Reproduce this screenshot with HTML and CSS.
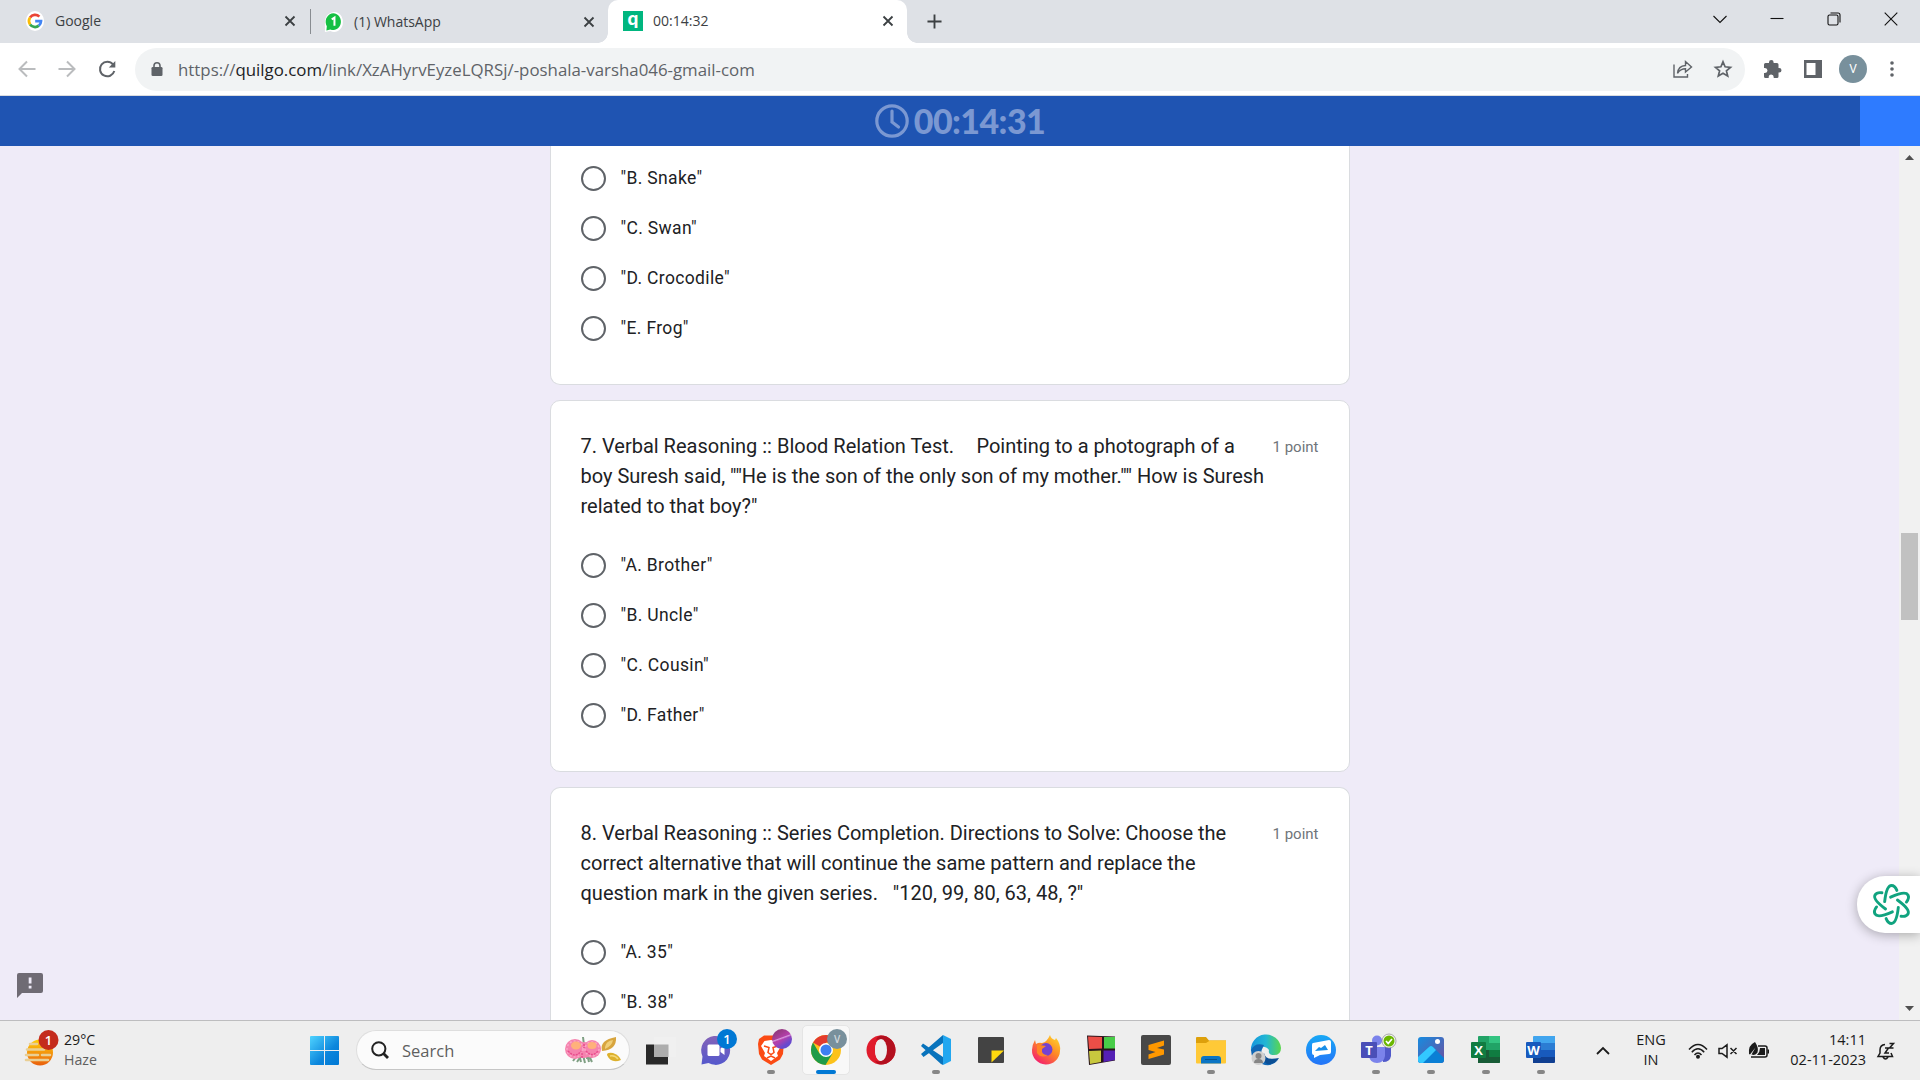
FILE: index.html
```html
<!DOCTYPE html>
<html lang="en">
<head>
<meta charset="utf-8">
<title>00:14:32</title>
<link rel="stylesheet" href="styles.css">
</head>
<body>
<div class="desktop">
  <header class="tabstrip">
    <div class="tab">
      <svg class="favicon" viewBox="0 0 20 22"><ellipse cx="10" cy="11" rx="10" ry="11" fill="#fff"/><g fill="none" stroke-width="3"><path d="M4.6 7.2A6.6 6.6 0 0 1 14.8 6.2" stroke="#ea4335"/><path d="M4.6 7.2a6.8 6.8 0 0 0 0 7.6" stroke="#fbbc05"/><path d="M4.6 14.8a6.6 6.6 0 0 0 9.6 1.3" stroke="#34a853"/><path d="M10.2 11.2h6.4a6.6 6.6 0 0 1-2.4 4.9" stroke="#4285f4"/></g></svg>
      <span class="tab-title">Google</span>
      <svg class="close" viewBox="0 0 12 12"><path d="M1.5 1.5l9 9M10.5 1.5l-9 9"/></svg>
    </div>
    <div class="tab tab-second">
      <svg class="favicon" viewBox="0 0 20 22"><path d="M0 22V11A10 11 0 1 1 6 21z" fill="#fff"/><path d="M1.600 20.300l.5-4.700A8.400 9.200 0 1 1 6 19.200z" fill="#15c043"/><path d="M7.500 8l3-1.800V15" fill="none" stroke="#fff" stroke-width="2.200"/></svg>
      <span class="tab-title">(1) WhatsApp</span>
      <svg class="close" viewBox="0 0 12 12"><path d="M1.500 1.500l9 9M10.500 1.500l-9 9"/></svg>
    </div>
    <div class="tab tab-active">
      <span class="q-icon">q</span>
      <span class="tab-title">00:14:32</span>
      <svg class="close" viewBox="0 0 12 12"><path d="M1.500 1.500l9 9M10.500 1.500l-9 9"/></svg>
    </div>
    <svg class="new-tab" viewBox="0 0 16 16"><path d="M8 .5v15M.5 8h15"/></svg>
    <div class="window-buttons">
      <svg viewBox="0 0 14 14"><path d="M.5 4L7 10.500 13.500 4"/></svg>
      <svg viewBox="0 0 14 14"><path d="M.5 6.500h13"/></svg>
      <svg viewBox="0 0 14 14"><rect x="1" y="3" width="10" height="10" rx="1.500"/><path d="M3.500 1H11q2 0 2 2v7.500"/></svg>
      <svg viewBox="0 0 14 14"><path d="M.7 .7l12.600 12.600M13.300 .7L.7 13.300"/></svg>
    </div>
  </header>

  <div class="toolbar">
    <div class="nav">
      <svg class="dim" viewBox="0 0 18 18"><path d="M17.500 9H1.500M9 1.500L1.500 9 9 16.500"/></svg>
      <svg class="dim" viewBox="0 0 18 18"><path d="M.5 9h16M9 1.500L16.500 9 9 16.500"/></svg>
      <svg viewBox="0 0 18 18"><path d="M15 4.500A7.300 7.300 0 1 0 16.300 11"/><path d="M17.300 1v6.500h-6.500z" fill="#5f6368" stroke="none"/></svg>
    </div>
    <div class="omnibox">
      <svg class="lock" viewBox="0 0 12 14"><rect x=".5" y="5" width="11" height="9" rx="1.300" fill="#5f6368"/><path d="M3 5.500V3.800a3 3 0 0 1 6 0v1.700" fill="none" stroke="#5f6368" stroke-width="1.600"/></svg>
      <span class="url">https://<b>quilgo.com</b>/link/XzAHyrvEyzeLQRSj/-poshala-varsha046-gmail-com</span>
      <svg class="share" viewBox="0 0 20 18"><path d="M1 4.500V17h13.500v-3M4.500 13.300c.5-5 3.500-7.500 8-7.800V1.500L18.500 7l-6 5V8.800c-4 0-6 1.500-8 4.500z"/></svg>
      <svg class="star" viewBox="0 0 18 18"><path d="M9 1.800l2.100 5 5.400.5-4.100 3.500 1.300 5.300L9 13.300l-4.700 2.800 1.300-5.300-4.100-3.500 5.400-.5z"/></svg>
    </div>
    <svg class="puzzle" viewBox="0 0 20 20"><path d="M2 5.500q0-1.500 1.500-1.500H7V3.300a2.300 2.300 0 0 1 4.600 0V4H15q1.500 0 1.500 1.500V9h.7a2.300 2.300 0 0 1 0 4.600h-.7v3.900q0 1.500-1.500 1.500h-3.300v-1a2.500 2.500 0 0 0-5 0v1H3.500Q2 19 2 17.500V14h1a2.500 2.500 0 0 0 0-5H2z" fill="#5f6368"/></svg>
    <svg class="panel" viewBox="0 0 18 18"><path fill-rule="evenodd" d="M0 0h18v18H0zM2.500 3v12h9V3z" fill="#5f6368"/></svg>
    <span class="avatar">V</span>
    <svg class="kebab" viewBox="0 0 4 16"><circle cx="2" cy="2" r="1.800"/><circle cx="2" cy="8" r="1.800"/><circle cx="2" cy="14" r="1.800"/></svg>
  </div>

  <div class="timer">
    <svg viewBox="0 0 34 34"><circle cx="17" cy="17" r="15.200"/><path d="M17 7v11l6.500 5"/></svg>
    <span>00:14:31</span>
  </div>

  <main class="page">
    <div class="viewport">
      <section class="card card-first">
        <label class="option"><i></i>"B. Snake"</label>
        <label class="option"><i></i>"C. Swan"</label>
        <label class="option"><i></i>"D. Crocodile"</label>
        <label class="option"><i></i>"E. Frog"</label>
      </section>
      <section class="card">
        <div class="question"><h2>7. Verbal Reasoning :: Blood Relation Test. &nbsp;&nbsp; <span class="after-gap">Pointing to a photograph of a</span><br>boy Suresh said, ""He is the son of the only son of my mother."" How is Suresh<br>related to that boy?"</h2><span class="points">1 point</span></div>
        <label class="option"><i></i>"A. Brother"</label>
        <label class="option"><i></i>"B. Uncle"</label>
        <label class="option"><i></i>"C. Cousin"</label>
        <label class="option"><i></i>"D. Father"</label>
      </section>
      <section class="card card-last">
        <div class="question"><h2>8. Verbal Reasoning :: Series Completion. Directions to Solve: Choose the<br>correct alternative that will continue the same pattern and replace the<br>question mark in the given series. &nbsp; "120, 99, 80, 63, 48, ?"</h2><span class="points">1 point</span></div>
        <label class="option"><i></i>"A. 35"</label>
        <label class="option"><i></i>"B. 38"</label>
      </section>
    </div>
    <div class="scrollbar">
      <svg viewBox="0 0 9 5"><path d="M0 5L4.500 0 9 5z"/></svg>
      <span class="thumb"></span>
      <svg class="down" viewBox="0 0 9 5"><path d="M0 0l4.500 5L9 0z"/></svg>
    </div>
    <svg class="feedback" viewBox="0 0 26 25"><path d="M2 0h22q2 0 2 2v16q0 2-2 2H5l-5 5V2q0-2 2-2z" fill="#6f6b74"/><path d="M11.700 4.500h2.800v6h-2.800zM11.700 12.800h2.800v2.800h-2.800z" fill="#efebf8"/></svg>
    <div class="assistant">
      <svg viewBox="-20 -21 40 42"><g fill="none" stroke="#10a37f" stroke-width="3" stroke-linecap="round">
        <path id="petal" d="M-7-3C-6-12-4-19.500 0-19.500q3.500 0 5.500 5"/>
        <use href="#petal" transform="rotate(60)"/><use href="#petal" transform="rotate(120)"/><use href="#petal" transform="rotate(180)"/><use href="#petal" transform="rotate(240)"/><use href="#petal" transform="rotate(300)"/></g></svg>
    </div>
  </main>

  <footer class="taskbar">
    <div class="weather">
      <svg viewBox="0 0 36 36"><defs><linearGradient id="sun" x2="0" y2="1"><stop stop-color="#ffcf0a"/><stop offset="1" stop-color="#e95f0c"/></linearGradient></defs><circle cx="16" cy="21.500" r="13" fill="url(#sun)"/><path d="M6 13h7M3 18.500h17M2 24h12M18 24h8M2 29h22" stroke="#e9cf94" stroke-width="2.600" stroke-linecap="round"/><circle cx="24.500" cy="9" r="10" fill="#c42b1c"/><text x="24.500" y="13.800" text-anchor="middle" class="badge-text">1</text></svg>
      <div class="weather-text"><span>29°C</span><span class="muted">Haze</span></div>
    </div>
    <svg class="start" viewBox="0 0 29 29"><defs><linearGradient id="win" gradientUnits="userSpaceOnUse" x1="0" y1="0" x2="29" y2="29"><stop stop-color="#4fd3ff"/><stop offset=".6" stop-color="#0c86dc"/><stop offset="1" stop-color="#0078d4"/></linearGradient></defs><path fill="url(#win)" d="M1 0h13v14H0V1q0-1 1-1zM15 0h13q1 0 1 1v13H15zM0 15h14v14H1q-1 0-1-1zM15 15h14v13q0 1-1 1H15z"/></svg>
    <div class="search">
      <svg class="glass" viewBox="0 0 18 18"><circle cx="7.800" cy="7.800" r="6.600"/><path d="M12.500 12.500l4.500 4.500" stroke-width="2.800"/></svg>
      <span>Search</span>
      <svg class="flowers" viewBox="0 0 58 28"><path d="M17 20l-4 6M19 19l2 8M25 20l3 6M12 21l-3 4M19 1l1 8M22 22l6-1M16 22l1 4M24 22l1 4" stroke="#7f9f83" stroke-width="2"/><g fill="#f583ae"><circle cx="11" cy="13" r="10"/><circle cx="28" cy="13" r="9"/><circle cx="20" cy="14" r="8"/></g><g fill="none" stroke="#f9a9c8" stroke-width="1.500" stroke-dasharray="2 2"><circle cx="11" cy="13" r="8"/><circle cx="28" cy="13" r="7"/></g><g fill="none" stroke="#e84b8c" stroke-width="1.500" stroke-dasharray="2 1"><path d="M4 15q7 8 13 0M22 15q6 7 12 0M18 17v5M20 8v4"/></g><ellipse cx="12" cy="9.500" rx="5" ry="4" fill="#ffb17b"/><ellipse cx="28" cy="9.500" rx="4.500" ry="3.500" fill="#ffb17b"/><path d="M38 15Q35 4 52 1q1 13-14 14z" fill="#d8a53e"/><path d="M41 11q1-6 8-7-1 6-8 9z" fill="#f0cf78"/><path d="M43 19q0-3 6-2 6 2 8 7-10 4-14-5z" fill="#ddb12d"/><path d="M46 20q5-1 8 3" fill="none" stroke="#f5d978" stroke-width="1.500"/></svg>
    </div>
    <nav class="apps">
      <div class="app"><svg viewBox="0 0 32 32"><path d="M1 10.500h22v20H1z" fill="#292929"/><path d="M9 3h22v20H9z" fill="#f0f0f0"/><path d="M9 10.500h14.500V23H9z" fill="#adadad"/></svg></div>
      <div class="app"><svg viewBox="0 0 32 32"><defs><linearGradient id="chat" x2="0" y2="1"><stop stop-color="#8463b8"/><stop offset="1" stop-color="#5458cc"/></linearGradient></defs><path d="M1.500 30.500l1-8a14.500 14.500 0 1 1 6 6.500z" fill="url(#chat)"/><rect x="7.500" y="10.500" width="12" height="11.500" rx="1.500" fill="#fff"/><path d="M20.500 14.500l4-3v9.500l-4-3z" fill="#fff"/></svg><span class="badge blue">1</span></div>
      <div class="app run"><svg viewBox="0 0 32 32"><path d="M9 1.500h14l6 5.500-1 13-3 5.500-9 5.500-9-5.500-3-5.500L3 10l1-5z" fill="#fb4b14"/><path d="M9.500 7l6.500-1 6.500 1L26 12l-4 7 1 3-7 5-7-5 1-3-4-7z" fill="#fff"/><path d="M9 12l5 1.500-1 5 3 2 3-2-1-5 5-1.500M12 24l4-2 4 2" fill="none" stroke="#fb4b14" stroke-width="1.500"/></svg><span class="badge violet"></span></div>
      <div class="app current"><svg viewBox="0 0 32 32"><circle cx="16" cy="16" r="15" fill="#fcc21b"/><path d="M16 16L3 8.500A15 15 0 0 1 29 8.500H16z" fill="#e33b2e"/><path d="M3 8.500A15 15 0 0 0 15.500 31L22.500 19.500l-13 0z" fill="#1e9b49"/><circle cx="16" cy="16" r="7" fill="#fff"/><circle cx="16" cy="16" r="5.500" fill="#3d7ff0"/></svg><span class="badge grey">V</span></div>
      <div class="app"><svg viewBox="0 0 32 32"><path fill-rule="evenodd" d="M16 1.500a14.500 14.500 0 1 0 0 29 14.500 14.500 0 0 0 0-29zm0 3.500c4 0 6 5 6 11s-2 11-6 11-6-5-6-11 2-11 6-11z" fill="#e01b2c"/><path d="M16 1.500a14.500 14.500 0 0 1 0 29c-3 0-5-2-6-4 12 6 16-19 1-21 1-2 3-4 5-4z" fill="#b3101f"/><ellipse cx="16" cy="16" rx="6" ry="11" fill="#eee"/></svg></div>
      <div class="app run"><svg viewBox="0 0 32 32"><path d="M23 1l8 4v22l-8 4z" fill="#22a7f0"/><path d="M3 9.500L1 12l20 18 2 1v-8zM23 1L1 20l2.500 3L23 9z" fill="#0873bc"/></svg></div>
      <div class="app"><svg viewBox="0 0 32 32"><rect x="3" y="3" width="26" height="26" rx="1" fill="#434343"/><path d="M16.500 16.500H29l-12.500 12z" fill="#ffd90f"/></svg></div>
      <div class="app"><svg viewBox="0 0 32 32"><defs><linearGradient id="fox" x1="1" y1="0" x2=".3" y2="1"><stop stop-color="#ffe22e"/><stop offset=".5" stop-color="#ff8a25"/><stop offset="1" stop-color="#f4206c"/></linearGradient></defs><path d="M20 1q1 4 5 5l1-2q5 6 4 13a14 14 0 0 1-28-1Q2 11 5 6l1 4q3-2 6-1 5-1 8-8z" fill="url(#fox)"/><circle cx="16" cy="15.500" r="6.500" fill="#7442d0"/><path d="M7 11q4 0 9 1l-4 3q-1 6 6 6-7 4-11-2z" fill="#ff8525"/></svg></div>
      <div class="app"><svg viewBox="0 0 32 32"><path d="M2 1.500l28 1v24L4 31z" fill="#28141a"/><path d="M3 2.500l14 .5v11.500l-13 .5z" fill="#ec4e47"/><path d="M19 3h11v11.500H19z" fill="#48cc48"/><path d="M4 17l12-.5v11.500L5 30z" fill="#c8c83e"/><path d="M18.500 16.500H30v9.500l-11.500 2z" fill="#5520b5"/></svg></div>
      <div class="app"><svg viewBox="0 0 32 32"><rect x="1" y="1" width="30" height="30" rx="2" fill="#484848"/><path d="M24 6.500L8.500 11v5l7 2-7 2.500v4.500L24 20.500v-5L17 14l7-2.500z" fill="#ff9800"/></svg></div>
      <div class="app run"><svg viewBox="0 0 32 32"><path d="M1 4q0-1 1-1h9l3 3.500h17V18H1z" fill="#dda00b"/><path d="M1 9h10l4-2.500h16v22q0 1-1 1H2q-1 0-1-1z" fill="#ffc937"/><path d="M6 29.500V25q0-3 3-3h14q3 0 3 3v4.500z" fill="#0b75c4"/><path d="M10 25.500h12" stroke="#07538d"/></svg></div>
      <div class="app"><svg viewBox="0 0 32 32"><defs><linearGradient id="edge"><stop stop-color="#1595dd"/><stop offset=".5" stop-color="#22b7d4"/><stop offset="1" stop-color="#5bd74c"/></linearGradient></defs><path d="M1 17A15 15 0 0 1 31 14q0 8-9 7-4-1-3-5-5-7-18 1z" fill="url(#edge)"/><path d="M1 16q4-8 13-5-7 12 3 17 5 2 11-2-7 8-16 4Q1 27 1 16z" fill="#1067b5"/><path d="M14 19q1 8 15 5-4 7-12 6-6-4-3-11z" fill="#0b4f95"/><circle cx="8.500" cy="24" r="7" fill="#cfcfcf"/><circle cx="8.500" cy="22" r="3" fill="#858585"/><path d="M4 29q0-4 4.500-4t4.500 4z" fill="#858585"/></svg></div>
      <div class="app"><svg viewBox="0 0 32 32"><defs><linearGradient id="msg" x2="0" y2="1"><stop stop-color="#18a8f5"/><stop offset="1" stop-color="#2474f8"/></linearGradient></defs><circle cx="16" cy="16" r="15" fill="url(#msg)"/><path d="M8 9l16-3q2 0 2 2v10q0 2-2 2l-9 1-6 3 0-3q-2 0-2-2v-8q0-2 1-2z" fill="#fff"/><path d="M10 17l4-4 2 1 4-3 3 5z" fill="#188ee8"/></svg></div>
      <div class="app run"><svg class="teams" viewBox="0 0 36 32"><circle cx="17" cy="6.500" r="5" fill="#7b83eb"/><circle cx="27" cy="9" r="3.500" fill="#5059c9"/><path d="M22 13h9v9q-1 6-8 6z" fill="#5059c9"/><path d="M10 13h15v9q-1 7-8 7t-8-7z" fill="#7b83eb"/><rect x="1" y="8" width="16" height="16" rx="1" fill="#4a4fb8"/><text x="9" y="21" text-anchor="middle" class="office-text">T</text><circle cx="29" cy="7" r="7" fill="#f5f5f5" stroke="#777" stroke-width=".6"/><circle cx="29" cy="7" r="5.500" fill="#6bb700"/><path d="M26 7l2.200 2.500L32 5" fill="none" stroke="#fff" stroke-width="1.700"/></svg></div>
      <div class="app run"><svg viewBox="0 0 32 32"><defs><linearGradient id="photo" x2="1" y2="1"><stop stop-color="#168ce0"/><stop offset="1" stop-color="#6e4f9e"/></linearGradient></defs><rect x="3" y="3" width="26" height="26" rx="3" fill="url(#photo)"/><path d="M3 24L14 13q2-2 4 0l11 11v2q0 3-3 3H6q-3 0-3-3z" fill="#0a7fd5"/><path d="M3 23l11-10q2-2 4 0l3 3L8 29H6q-3 0-3-3z" fill="#33c8ff"/><circle cx="22.500" cy="7.500" r="2.500" fill="#fff"/></svg></div>
      <div class="app run"><svg viewBox="0 0 32 32"><path d="M8 3q0-1 1-1h21v26q0 1-1 1H8z" fill="#21a366"/><path d="M19 2h11v7H19z" fill="#33c481"/><path d="M8 16h11v7H8z" fill="#185c37"/><path d="M19 16h11v7H19z" fill="#107c41"/><path d="M8 23h22v5q0 1-1 1H8z" fill="#185c37"/><rect x="1" y="8" width="15" height="16" rx="1" fill="#107c41"/><text x="8.500" y="20.800" text-anchor="middle" class="office-text">X</text></svg></div>
      <div class="app run"><svg viewBox="0 0 32 32"><path d="M8 3q0-1 1-1h21v7H8z" fill="#41a5ee"/><path d="M8 9h22v7H8z" fill="#2b7cd3"/><path d="M8 16h22v7H8z" fill="#185abd"/><path d="M8 23h22v5q0 1-1 1H8z" fill="#103f91"/><rect x="1" y="8" width="15" height="16" rx="1" fill="#185abd"/><text x="8.500" y="20.800" text-anchor="middle" class="office-text">W</text></svg></div>
    </nav>
    <div class="tray">
      <svg class="chevron" viewBox="0 0 14 8"><path d="M1 7l6-6 6 6"/></svg>
      <div class="lang"><span>ENG</span><span>IN</span></div>
      <svg class="wifi" viewBox="0 0 20 16"><path d="M1 6.500q9-10 18 0M3.800 9.300q6.200-7 12.400 0M6.500 12q3.500-4 7 0"/><circle cx="10" cy="13.700" r="2" fill="#1b1b1b" stroke="none"/></svg>
      <svg class="speaker" viewBox="0 0 20 14"><path d="M1 4.500h3L9 .8v12.400L4 9.500H1zM12.500 4l6 6M18.500 4l-6 6"/></svg>
      <svg class="battery" viewBox="0 0 20 17"><path d="M9 4h7q2 0 2 2v7q0 2-2 2H2"/><path d="M11 6h5v7H8q3-3 3-7zM18.500 7.500h1.500v4h-1.500zM0 12Q-1 3 6 0q4 6 2.500 10.500-2 3.500-6 2l4-7-5.500 7z" fill="#1b1b1b" stroke="none"/></svg>
      <div class="clock"><span>14:11</span><span>02-11-2023</span></div>
      <svg class="bell" viewBox="0 0 18 18"><path d="M8 2.500Q3 3 3 8v3l-2 3.500h14.500L14 11M6 15q2.500 4 5 0M8 6h3.500L8 11h4M12.500 1.500h4L12.500 6h4"/></svg>
    </div>
  </footer>
</div>
</body>
</html>
```
FILE: styles.css
```css
* { box-sizing: border-box; }
body { margin: 0; font-family: "Open Sans", "Noto Sans", sans-serif; color: #1b1b1b; }
svg { display: block; flex: none; overflow: visible; }
.desktop { width: 1920px; height: 1080px; display: flex; flex-direction: column; overflow: hidden; }

/* Tab strip */
.tabstrip { height: 43px; flex: none; display: flex; align-items: flex-start; background: #dee1e6; }
.tab { height: 43px; width: 310px; display: flex; align-items: center; padding: 0 14px 2px 25px; gap: 10px; }
.tab-second { width: 298px; padding: 0 13px 0 13px; border-left: 1px solid #888c91; height: 25px; margin-top: 9px; }
.tab-active { position: relative; width: 299px; padding: 0 13px 2px 15px; background: #fff; border-radius: 10px 10px 0 0; }
.tab-active::before, .tab-active::after { content: ""; position: absolute; bottom: 0; width: 10px; height: 10px; }
.tab-active::before { left: -10px; background: radial-gradient(circle at 0 0, transparent 9.5px, #fff 10px); }
.tab-active::after { right: -10px; background: radial-gradient(circle at 100% 0, transparent 9.5px, #fff 10px); }
.favicon { width: 20px; height: 20px; }
.tab-title { flex: 1; font-size: 14px; line-height: 20px; color: #3c4043; white-space: nowrap; }
.close { width: 12px; height: 12px; fill: none; stroke: #3c4043; stroke-width: 1.8; }
.q-icon { width: 20px; height: 20px; background: #00b67f; color: #fff; font: 900 19px/14px Lato, sans-serif; text-align: center; }
.new-tab { width: 15px; height: 15px; margin: 14px 0 0 20px; fill: none; stroke: #3c4043; stroke-width: 2; }
.window-buttons { margin: 12px 22px 0 auto; display: flex; gap: 43px; }
.window-buttons svg { width: 14px; height: 14px; fill: none; stroke: #111; stroke-width: 1.1; }

/* Toolbar */
.toolbar { height: 53px; flex: none; display: flex; align-items: center; background: #fff; border-bottom: 1px solid #dadce0; }
.nav { width: 135px; display: flex; gap: 22px; padding-left: 18px; }
.nav svg { width: 18px; height: 18px; fill: none; stroke: #5f6368; stroke-width: 2; }
.nav .dim { stroke: #babcbe; }
.omnibox { width: 1610px; height: 43px; display: flex; align-items: center; padding: 0 13px 0 16px; background: #f1f3f4; border-radius: 22px; }
.lock { width: 12px; height: 14px; margin-right: 15px; }
.url { flex: 1; font-size: 16.85px; line-height: 24px; padding-top: 1px; color: #5f6368; white-space: nowrap; }
.url b { font-weight: 400; color: #202124; }
.share { width: 20px; height: 18px; margin-right: 21px; fill: none; stroke: #5f6368; stroke-width: 1.4; }
.star { width: 18px; height: 18px; fill: none; stroke: #5f6368; stroke-width: 1.7; }
.puzzle { width: 20px; height: 20px; margin-left: 17px; }
.panel { width: 18px; height: 18px; margin-left: 22px; }
.avatar { width: 28px; height: 28px; margin-left: 17px; border-radius: 50%; background: #78909c; color: #fff; font: 12px/28px Roboto, sans-serif; text-align: center; }
.kebab { width: 4px; height: 16px; margin-left: 23px; fill: #5f6368; }

/* Countdown bar */
.timer { height: 50px; flex: none; display: flex; align-items: center; justify-content: center; gap: 5px; padding-bottom: 1px; background: linear-gradient(90deg, #1f54b2 1860px, #2e7bff 1860px); color: #7b98d2; font: 900 34px/50px Lato, sans-serif; letter-spacing: -.6px; }
.timer svg { width: 34px; height: 34px; fill: none; stroke: #7b98d2; stroke-width: 3.2; stroke-linecap: round; }

/* Form */
.page { position: relative; height: 874px; flex: none; display: flex; background: #efebf8; overflow: hidden; }
.viewport { flex: 1; display: flex; flex-direction: column; align-items: center; gap: 15px; font-family: Roboto, sans-serif; color: #202124; }
.card { width: 800px; flex: none; padding: 30px 30px 31px; background: #fff; border: 1px solid #dadce0; border-radius: 10px; }
.card-first { padding-top: 7px; border-top: 0; border-radius: 0 0 10px 10px; }
.card-last { border-bottom: 0; border-radius: 10px 10px 0 0; }
.question { display: flex; justify-content: space-between; margin-bottom: 19px; }
.question h2 { margin: 0; font-size: 20px; line-height: 30px; font-weight: 400; white-space: nowrap; }
.after-gap { margin-left: 2.5px; }
.points { font-size: 15px; line-height: 32px; color: #70757a; }
.option { height: 50px; display: flex; align-items: center; font-size: 17.5px; letter-spacing: .35px; white-space: nowrap; padding-bottom: 1px; }
.option i { width: 25px; height: 25px; margin: 1px 15px 0 0; border: 2.5px solid #5f6368; border-radius: 50%; }
.scrollbar { width: 21px; display: flex; flex-direction: column; align-items: center; padding: 9px 0; background: #f1f1f1; }
.scrollbar svg { width: 9px; height: 5px; fill: #505050; }
.thumb { width: 17px; height: 87px; margin-top: 373px; background: #c1c1c1; }
.scrollbar .down { margin-top: auto; }
.feedback { position: absolute; left: 17px; top: 827px; width: 26px; height: 25px; }
.assistant { position: absolute; right: 0; top: 730px; width: 63px; height: 57px; padding: 8px 9px 0 15px; background: #fff; border-radius: 28px 0 0 28px; box-shadow: 0 2px 12px rgba(0,0,0,.3); }
.assistant svg { width: 39px; height: 41px; }

/* Taskbar */
.taskbar { height: 60px; flex: none; display: flex; align-items: center; background: #eee; border-top: 1px solid #bdbdbf; }
.weather { width: 310px; display: flex; align-items: center; gap: 4px; padding-left: 24px; }
.weather svg { width: 36px; height: 36px; margin-bottom: 4px; }
.weather-text, .lang, .clock { display: flex; flex-direction: column; font-size: 14.5px; line-height: 20px; padding-bottom: 2px; }
.weather-text { font-size: 14.2px; }
.muted { color: #5f5f5f; }
.badge-text { font: 600 13px "Open Sans", sans-serif; fill: #fff; }
.office-text { font: 700 13px "Open Sans", sans-serif; fill: #fff; }
.start { width: 29px; height: 29px; }
.search { width: 274px; height: 40px; margin: 0 0 1px 17px; display: flex; align-items: center; padding: 0 7px 0 14px; border: 1px solid #dedede; border-bottom-color: #c6c6c6; border-radius: 20px; background: #fbfbfb; color: #5f5f5f; font-size: 16.5px; }
.search span { flex: 1; }
.glass { width: 18px; height: 18px; margin-right: 13px; fill: none; stroke: #222; stroke-width: 2; }
.flowers { width: 58px; height: 28px; }
.apps { display: flex; margin: 0 0 1px 3px; }
.app { position: relative; width: 55px; height: 50px; display: flex; align-items: center; justify-content: center; }
.app svg { width: 32px; height: 32px; }
.app .teams { width: 36px; margin-left: 5px; }
.run::after, .current::after { content: ""; position: absolute; left: 23.500px; bottom: 1px; width: 8px; height: 4px; border-radius: 2px; background: #868686; }
.current::before { content: ""; position: absolute; inset: 0 3px 0 4px; background: #f8f8f8; border: 1px solid #e5e5e5; border-radius: 5px; }
.current svg { position: relative; }
.current::after { left: 18px; width: 20px; background: #0078d4; }
.badge { position: absolute; left: 29px; top: 4px; width: 20px; height: 20px; border-radius: 50%; color: #fff; font: 600 13px/20px "Open Sans", sans-serif; text-align: center; }
.blue { background: #0078d4; }
.violet { background: linear-gradient(160deg, transparent 42%, #d899df 46%, transparent 52%), linear-gradient(145deg, #953a82 20%, #b640ad 50%, #6749ce 75%); }
.grey { background: #78909c; color: #d0d8dc; font-size: 10px; }
.tray { flex: 1; display: flex; align-items: center; padding-right: 25px; }
.tray svg { fill: none; stroke: #1b1b1b; stroke-width: 1.5; }
.tray .chevron { width: 14px; height: 8px; margin-left: 28px; stroke-width: 1.8; }
.lang { width: 40px; margin-left: 21px; align-items: center; }
.wifi { width: 20px; height: 16px; margin-left: 17px; }
.speaker { width: 20px; height: 14px; margin-left: 10px; }
.battery { width: 20px; height: 17px; margin-left: 11px; }
.clock { margin-left: auto; margin-right: 11px; align-items: flex-end; }
.bell { width: 18px; height: 18px; }
```
